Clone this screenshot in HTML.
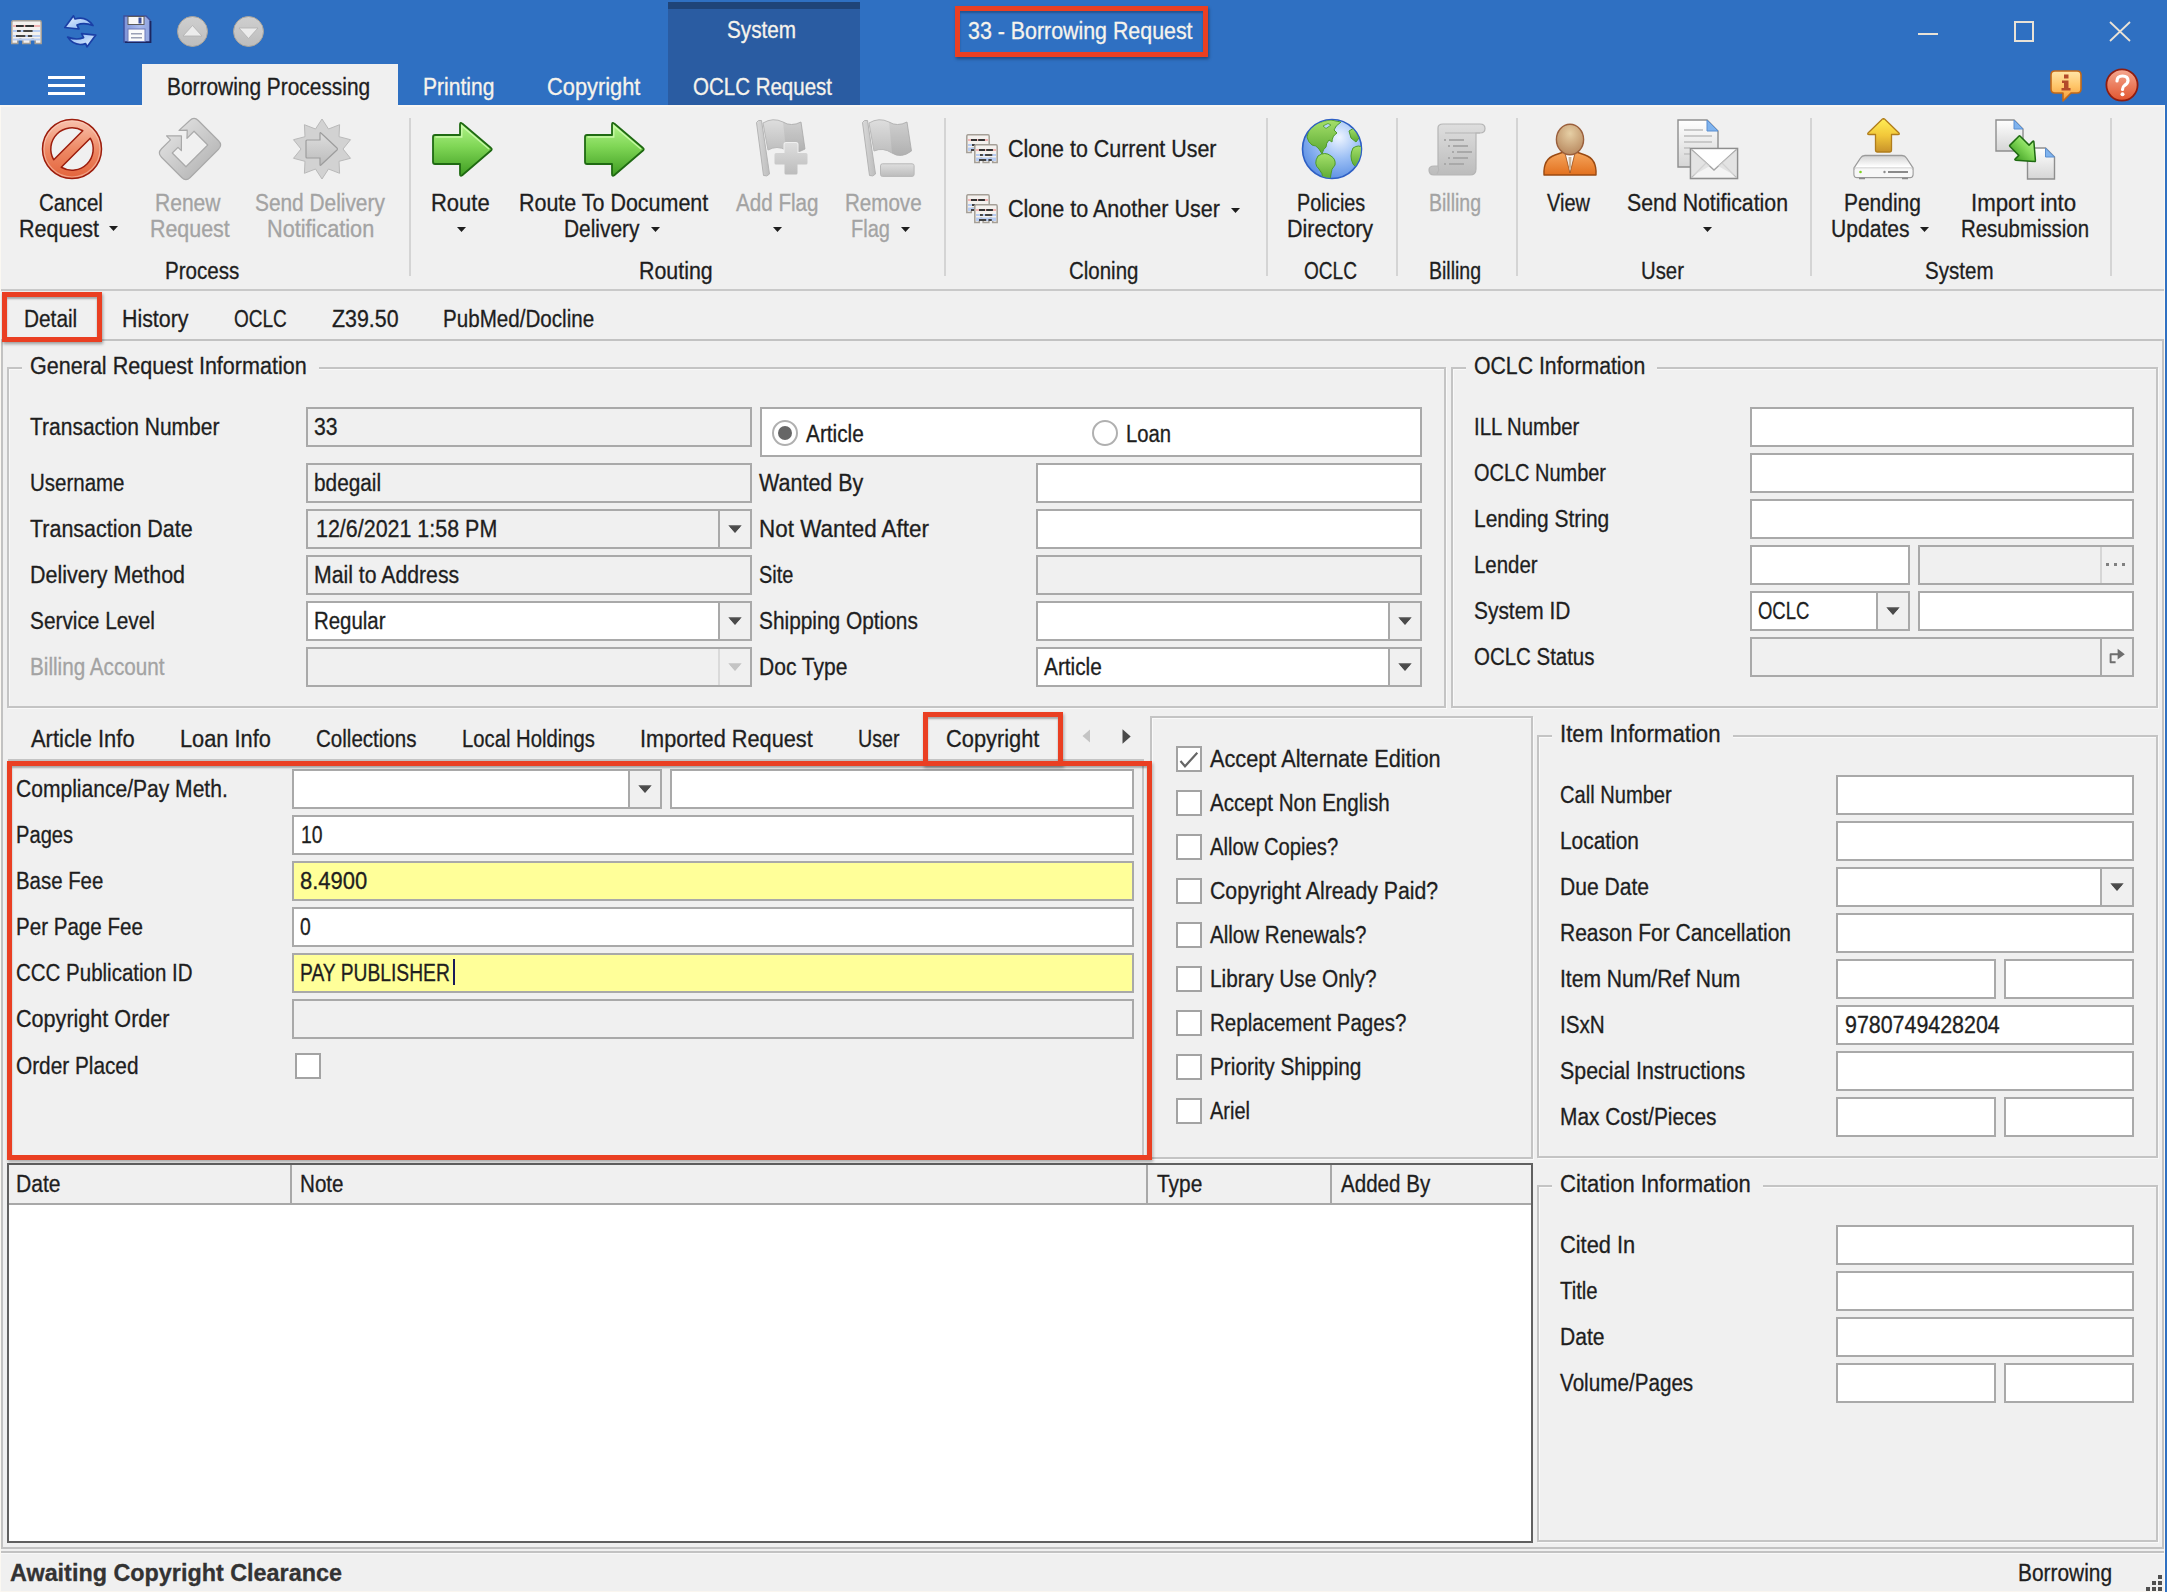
<!DOCTYPE html>
<html><head><meta charset="utf-8"><title>33 - Borrowing Request</title>
<style>
html,body{margin:0;padding:0;}
body{width:2167px;height:1592px;position:relative;overflow:hidden;background:#f0f0f0;font-family:"Liberation Sans",sans-serif;font-size:22px;color:#1e1e1e;}
div,span,svg{position:absolute;}
svg{overflow:visible;}
.t{white-space:nowrap;line-height:26px;height:26px;font-size:23px;transform-origin:0 50%;-webkit-text-stroke:0.3px currentColor;}
.w{color:#fff;}
.g{color:#a3a3a3;}
</style></head><body>

<div style="left:0px;top:0px;width:2167px;height:105px;background:#2f70c2;"></div>
<div style="left:668px;top:2px;width:192px;height:103px;background:#2a5ca2;"></div>
<div style="left:668px;top:2px;width:192px;height:7px;background:#1f4478;"></div>
<div style="left:142px;top:63.5px;width:256px;height:42px;background:#f0f0f0;"></div>
<div style="left:48px;top:76px;width:37px;height:3px;background:#fff;"></div>
<div style="left:48px;top:84px;width:37px;height:3px;background:#fff;"></div>
<div style="left:48px;top:92px;width:37px;height:3px;background:#fff;"></div>
<span class="t" style="left:727.3px;top:17px;transform:scaleX(0.9013);color:#f6f3ec;">System</span>
<span class="t" style="left:167.3px;top:74px;transform:scaleX(0.9080);">Borrowing Processing</span>
<span class="t" style="left:423.3px;top:74px;transform:scaleX(0.9154);color:#f6f3ec;">Printing</span>
<span class="t" style="left:547.3px;top:74px;transform:scaleX(0.9485);color:#f6f3ec;">Copyright</span>
<span class="t" style="left:693.3px;top:74px;transform:scaleX(0.8911);color:#f6f3ec;">OCLC Request</span>
<span class="t" style="left:967.8px;top:18px;transform:scaleX(0.9293);color:#f6f3ec;">33 - Borrowing Request</span>
<div style="left:1918px;top:33px;width:20px;height:2.4px;background:#e9e2d6;"></div>
<div style="left:2013.5px;top:21.3px;width:16.5px;height:16.5px;border:2px solid #e9e2d6;"></div>
<svg style="left:2109px;top:21px" width="22" height="21" viewBox="0 0 22 21"><path d="M1 1 L21 20 M21 1 L1 20" stroke="#e9e2d6" stroke-width="1.8" fill="none"/></svg>
<svg width="0" height="0" style="left:0;top:0"><defs>
<linearGradient id="gRed" x1="0" y1="0" x2="0" y2="1"><stop offset="0" stop-color="#f8c3ae"/><stop offset=".5" stop-color="#ee8a66"/><stop offset="1" stop-color="#e3633b"/></linearGradient>
<linearGradient id="gGrey" x1="0" y1="0" x2="0" y2="1"><stop offset="0" stop-color="#dedede"/><stop offset="1" stop-color="#bcbcbc"/></linearGradient>
<linearGradient id="gGrey2" x1="0" y1="0" x2="1" y2="0"><stop offset="0" stop-color="#d9d9d9"/><stop offset="1" stop-color="#bdbdbd"/></linearGradient>
<linearGradient id="gGreen" x1="0" y1="0" x2="0" y2="1"><stop offset="0" stop-color="#b4f58c"/><stop offset=".45" stop-color="#7fd655"/><stop offset="1" stop-color="#3f9d22"/></linearGradient>
<radialGradient id="gGlobe" cx=".62" cy=".3" r=".8"><stop offset="0" stop-color="#eef5ff"/><stop offset=".45" stop-color="#9dc0f5"/><stop offset="1" stop-color="#4f86e0"/></radialGradient>
<linearGradient id="gLand" x1="0" y1="0" x2="0" y2="1"><stop offset="0" stop-color="#a5e06a"/><stop offset="1" stop-color="#5aa832"/></linearGradient>
<radialGradient id="gHead" cx=".5" cy=".3" r=".7"><stop offset="0" stop-color="#e6cfa5"/><stop offset="1" stop-color="#b98a60"/></radialGradient>
<linearGradient id="gBody" x1="0" y1="0" x2="0" y2="1"><stop offset="0" stop-color="#f6a860"/><stop offset="1" stop-color="#e2701e"/></linearGradient>
<linearGradient id="gGold" x1="0" y1="0" x2="0" y2="1"><stop offset="0" stop-color="#ffee55"/><stop offset=".5" stop-color="#f2c83a"/><stop offset="1" stop-color="#c8922a"/></linearGradient>
<linearGradient id="gPaper" x1="0" y1="0" x2="0" y2="1"><stop offset="0" stop-color="#ffffff"/><stop offset="1" stop-color="#d5d5d5"/></linearGradient>
<linearGradient id="gDrive" x1="0" y1="0" x2="0" y2="1"><stop offset="0" stop-color="#d4d4d4"/><stop offset=".5" stop-color="#ffffff"/><stop offset="1" stop-color="#cfcfcf"/></linearGradient>
<linearGradient id="gBub" x1="0" y1="0" x2="0" y2="1"><stop offset="0" stop-color="#ffe6a8"/><stop offset=".5" stop-color="#ffc66a"/><stop offset="1" stop-color="#f59a35"/></linearGradient>
<linearGradient id="gHelp" x1="0" y1="0" x2="0" y2="1"><stop offset="0" stop-color="#f5a890"/><stop offset="1" stop-color="#e2552f"/></linearGradient>
<linearGradient id="gBlueArr" x1="0" y1="0" x2="1" y2="1"><stop offset="0" stop-color="#eaf3ff"/><stop offset="1" stop-color="#7fb0f0"/></linearGradient>
<linearGradient id="gFloppy" x1="0" y1="0" x2="1" y2="0"><stop offset="0" stop-color="#7d93d8"/><stop offset=".6" stop-color="#a8b9ea"/><stop offset="1" stop-color="#8ea3df"/></linearGradient>
<linearGradient id="gCirc" x1="0" y1="0" x2="0" y2="1"><stop offset="0" stop-color="#cfcfcf"/><stop offset="1" stop-color="#bdbdbd"/></linearGradient>
</defs></svg>
<svg style="left:11px;top:20px" width="31" height="24.5" viewBox="0 0 31 24.5"><path d="M2 0.8 H29 Q30.2 0.8 30.2 2.5 V23.5 H24.18 V20.5 Q21.7 17.5 19.22 20.5 V23.5 H11.78 V20.5 Q9.299999999999999 17.5 6.82 20.5 V23.5 H0.8 V2.5 Q0.8 0.8 2 0.8 Z" fill="#f4f1ee" stroke="#a59f97" stroke-width="1.5"/><rect x="2" y="5" width="27" height="2" fill="#f2b5b5"/><rect x="2" y="10" width="27" height="2" fill="#b9cdf2"/><rect x="2" y="15" width="27" height="2" fill="#b9cdf2"/><rect x="2" y="18.5" width="27" height="2" fill="#b9cdf2"/><rect x="5" y="5" width="7.75" height="2" fill="#333"/><rect x="14.299999999999999" y="5" width="8.680000000000001" height="2" fill="#333"/><rect x="6" y="10" width="3.7199999999999998" height="2" fill="#444"/><rect x="12.27" y="10" width="9.299999999999999" height="2" fill="#444"/><rect x="5" y="15" width="9.299999999999999" height="2" fill="#444"/><rect x="16.85" y="15" width="4.340000000000001" height="2" fill="#444"/></svg>
<svg style="left:64px;top:15px" width="32" height="32" viewBox="0 0 32 32"><path d="M29 10.5 Q22 0.5 11 4 L9.5 0.8 L0.8 12.5 L15 14 L13 10 Q20 7 29 10.5 Z" fill="url(#gBlueArr)" stroke="#1a3fa6" stroke-width="1.7" stroke-linejoin="round"/><path d="M29 10.5 Q22 0.5 11 4 L9.5 0.8 L0.8 12.5 L15 14 L13 10 Q20 7 29 10.5 Z" transform="rotate(180 16.3 16.3)" fill="url(#gBlueArr)" stroke="#1a3fa6" stroke-width="1.7" stroke-linejoin="round"/></svg>
<svg style="left:122.5px;top:15px" width="29" height="29" viewBox="0 0 29 29"><path d="M1 1 H23 L27 5 V27 H1 Z" fill="url(#gFloppy)" stroke="#3d4f9c" stroke-width="1.4"/><path d="M2 27.3 H27.6 V6" stroke="#1c2660" stroke-width="1.6" fill="none"/><rect x="5" y="1.5" width="16" height="8" fill="#f7f7f7" stroke="#5a5a5a" stroke-width="1"/><rect x="15.5" y="2.5" width="3" height="6" fill="#3d4f9c"/><rect x="5" y="14" width="17" height="12.5" fill="#fbfbfb" stroke="#6b78b8" stroke-width="1"/><rect x="8" y="18" width="11" height="1.5" fill="#9aa0b5"/><rect x="8" y="22" width="11" height="1.5" fill="#9aa0b5"/></svg>
<svg style="left:177.0px;top:16px" width="31" height="31" viewBox="0 0 31 31"><circle cx="15.5" cy="15.5" r="15" fill="url(#gCirc)" stroke="#a9a49c" stroke-width="1"/><path d="M6 20 L15.5 9.5 L25 20 Z" fill="#ececec" stroke="#b0b0b0" stroke-width=".8"/></svg>
<svg style="left:232.5px;top:16px" width="31" height="31" viewBox="0 0 31 31"><circle cx="15.5" cy="15.5" r="15" fill="url(#gCirc)" stroke="#a9a49c" stroke-width="1"/><path d="M6 12 L15.5 22.5 L25 12 Z" fill="#ececec" stroke="#b0b0b0" stroke-width=".8"/></svg>
<svg style="left:2050px;top:69.5px" width="32" height="32" viewBox="0 0 32 32"><path d="M5 1 H27 Q31 1 31 5 V19 Q31 23 27 23 H21 L13 31 V23 H5 Q1 23 1 19 V5 Q1 1 5 1 Z" fill="url(#gBub)" stroke="#c46a18" stroke-width="1.6" stroke-linejoin="round"/><rect x="14" y="4.5" width="4.5" height="4" fill="#b34a2a"/><path d="M12 10.5 H18.5 V18 H20.5 V20.5 H11.5 V18 H14 V13 H12 Z" fill="#b34a2a"/></svg>
<svg style="left:2105px;top:68.2px" width="34" height="34" viewBox="0 0 34 34"><circle cx="17" cy="17" r="15.6" fill="url(#gHelp)" stroke="#8f1d10" stroke-width="1.8"/><path d="M12 13 Q12 8 17.5 8 Q23 8 23 12.5 Q23 15.5 19.5 17.5 Q17.5 18.8 17.5 21.5" fill="none" stroke="#fff" stroke-width="3.2" stroke-linecap="round"/><circle cx="17.5" cy="26.3" r="2" fill="#fff"/></svg>
<div style="left:0px;top:105px;width:2167px;height:185px;background:#f0f0f0;"></div>
<div style="left:0px;top:289px;width:2167px;height:2px;background:#c9c9c9;"></div>
<div style="left:0px;top:105px;width:142px;height:2px;background:#f9f6f2;"></div>
<div style="left:398px;top:105px;width:1767px;height:2px;background:#f9f6f2;"></div>
<div style="left:409px;top:118px;width:2px;height:158px;background:#d4d4d4;"></div>
<div style="left:944px;top:118px;width:2px;height:158px;background:#d4d4d4;"></div>
<div style="left:1266px;top:118px;width:2px;height:158px;background:#d4d4d4;"></div>
<div style="left:1396px;top:118px;width:2px;height:158px;background:#d4d4d4;"></div>
<div style="left:1516px;top:118px;width:2px;height:158px;background:#d4d4d4;"></div>
<div style="left:1810px;top:118px;width:2px;height:158px;background:#d4d4d4;"></div>
<div style="left:2110px;top:118px;width:2px;height:158px;background:#d4d4d4;"></div>
<span class="t" style="left:38.8px;top:190px;transform:scaleX(0.8917);">Cancel</span>
<span class="t" style="left:19.4px;top:216px;transform:scaleX(0.9349);">Request</span>
<svg style="left:109.0px;top:225.5px" width="9" height="5" viewBox="0 0 9 5"><path d="M0 0 L9 0 L4.5 5 Z" fill="#1e1e1e"/></svg>
<span class="t" style="left:154.6px;top:190px;transform:scaleX(0.9153);color:#a3a3a3;">Renew</span>
<span class="t" style="left:149.6px;top:216px;transform:scaleX(0.9302);color:#a3a3a3;">Request</span>
<span class="t" style="left:255.4px;top:190px;transform:scaleX(0.9069);color:#a3a3a3;">Send Delivery</span>
<span class="t" style="left:267.0px;top:216px;transform:scaleX(0.9421);color:#a3a3a3;">Notification</span>
<span class="t" style="left:430.5px;top:190px;transform:scaleX(0.9557);">Route</span>
<svg style="left:456.5px;top:226.5px" width="9" height="5" viewBox="0 0 9 5"><path d="M0 0 L9 0 L4.5 5 Z" fill="#1e1e1e"/></svg>
<span class="t" style="left:519.3px;top:190px;transform:scaleX(0.9328);">Route To Document</span>
<span class="t" style="left:563.7px;top:216px;transform:scaleX(0.9083);">Delivery</span>
<svg style="left:650.5px;top:226.5px" width="9" height="5" viewBox="0 0 9 5"><path d="M0 0 L9 0 L4.5 5 Z" fill="#1e1e1e"/></svg>
<span class="t" style="left:736.3px;top:190px;transform:scaleX(0.8967);color:#a3a3a3;">Add Flag</span>
<svg style="left:772.5px;top:226.5px" width="9" height="5" viewBox="0 0 9 5"><path d="M0 0 L9 0 L4.5 5 Z" fill="#1e1e1e"/></svg>
<span class="t" style="left:845.4px;top:190px;transform:scaleX(0.8942);color:#a3a3a3;">Remove</span>
<span class="t" style="left:851.3px;top:216px;transform:scaleX(0.8689);color:#a3a3a3;">Flag</span>
<svg style="left:900.5px;top:226.5px" width="9" height="5" viewBox="0 0 9 5"><path d="M0 0 L9 0 L4.5 5 Z" fill="#1e1e1e"/></svg>
<span class="t" style="left:1007.5px;top:136px;transform:scaleX(0.9321);">Clone to Current User</span>
<span class="t" style="left:1007.5px;top:196px;transform:scaleX(0.9361);">Clone to Another User</span>
<svg style="left:1230.9px;top:207.5px" width="9" height="5" viewBox="0 0 9 5"><path d="M0 0 L9 0 L4.5 5 Z" fill="#1e1e1e"/></svg>
<span class="t" style="left:1296.7px;top:190px;transform:scaleX(0.8608);">Policies</span>
<span class="t" style="left:1287.0px;top:216px;transform:scaleX(0.9355);">Directory</span>
<span class="t" style="left:1428.7px;top:190px;transform:scaleX(0.8475);color:#a3a3a3;">Billing</span>
<span class="t" style="left:1547.0px;top:190px;transform:scaleX(0.8680);">View</span>
<span class="t" style="left:1627.3px;top:190px;transform:scaleX(0.9259);">Send Notification</span>
<svg style="left:1702.5px;top:226.5px" width="9" height="5" viewBox="0 0 9 5"><path d="M0 0 L9 0 L4.5 5 Z" fill="#1e1e1e"/></svg>
<span class="t" style="left:1844.4px;top:190px;transform:scaleX(0.9107);">Pending</span>
<span class="t" style="left:1831.4px;top:216px;transform:scaleX(0.9163);">Updates</span>
<svg style="left:1920.3px;top:226.5px" width="9" height="5" viewBox="0 0 9 5"><path d="M0 0 L9 0 L4.5 5 Z" fill="#1e1e1e"/></svg>
<span class="t" style="left:1970.9px;top:190px;transform:scaleX(0.9679);">Import into</span>
<span class="t" style="left:1960.9px;top:216px;transform:scaleX(0.8861);">Resubmission</span>
<span class="t" style="left:165.0px;top:258px;transform:scaleX(0.8952);">Process</span>
<span class="t" style="left:639.3px;top:258px;transform:scaleX(0.9291);">Routing</span>
<span class="t" style="left:1069.3px;top:258px;transform:scaleX(0.8897);">Cloning</span>
<span class="t" style="left:1303.5px;top:258px;transform:scaleX(0.8281);">OCLC</span>
<span class="t" style="left:1428.7px;top:258px;transform:scaleX(0.8475);">Billing</span>
<span class="t" style="left:1641.0px;top:258px;transform:scaleX(0.8837);">User</span>
<span class="t" style="left:1925.4px;top:258px;transform:scaleX(0.8935);">System</span>
<svg style="left:41.4px;top:118.1px" width="62" height="62" viewBox="0 0 62 62"><circle cx="31" cy="31" r="29.5" fill="url(#gRed)" stroke="#9c1d0d" stroke-width="1.5"/><circle cx="31" cy="31" r="28" fill="none" stroke="#fbd5c6" stroke-width="1.2" opacity=".5"/><path d="M12.74 41.77 A21.2 21.2 0 0 1 41.77 12.74 Z" fill="#f0f0f0" stroke="#9c1d0d" stroke-width="1.5" stroke-linejoin="round"/><path d="M49.26 20.23 A21.2 21.2 0 0 1 20.23 49.26 Z" fill="#f0f0f0" stroke="#9c1d0d" stroke-width="1.5" stroke-linejoin="round"/></svg>
<svg style="left:158.2px;top:117.2px" width="64" height="64" viewBox="0 0 64 64"><g transform="rotate(-45 32 32)"><path d="M35.2 16.7 L24.7 27.1 L24.7 22.3 L16.6 22.3 L16.6 41.7 L47.4 41.7 L47.4 22.3 L37.4 22.3 L43.4 16.7 L37.4 11.1 L52.0 11.7 Q58.0 11.7 58.0 17.7 L58.0 46.3 Q58.0 52.3 52.0 52.3 L12.0 52.3 Q6.0 52.3 6.0 46.3 L6.0 17.7 Q6.0 11.7 12.0 11.7 L24.7 11.7 L24.7 6.1 Z" fill="url(#gGrey)" stroke="#a9a9a9" stroke-width="1.2" stroke-linejoin="round"/></g></svg>
<svg style="left:290.1px;top:117.2px" width="64" height="64" viewBox="0 0 64 64"><polygon points="32.0,2.0 38.5,12.0 49.6,7.7 49.0,19.7 60.5,22.7 53.0,32.0 60.5,41.3 49.0,44.3 49.6,56.3 38.5,52.0 32.0,62.0 25.5,52.0 14.4,56.3 15.0,44.3 3.5,41.3 11.0,32.0 3.5,22.7 15.0,19.7 14.4,7.7 25.5,12.0" fill="#d2d2d2" stroke="#b9b9b9" stroke-width="1"/><path d="M17 23 H30 V16.5 Q30 15 31.2 16.2 L47 31 Q48 32 47 33 L31.2 47.8 Q30 49 30 47.5 V41 H17 Q16 41 16 40 V24 Q16 23 17 23 Z" fill="url(#gGrey)" stroke="#9d9d9d" stroke-width="1.2"/></svg>
<svg style="left:432px;top:120.7px" width="62" height="57" viewBox="0 0 62 57"><path d="M3 14 H28 V3.5 Q28 0.5 30.5 2.8 L59 27 Q60.5 28.2 59 29.5 L30.5 54 Q28 56 28 53 V43 H3 Q1 43 1 41 V16 Q1 14 3 14 Z" fill="url(#gGreen)" stroke="#1f6a12" stroke-width="1.8" stroke-linejoin="round"/><path d="M3.5 16 H29.8 V5 L57 28" fill="none" stroke="#d5ffb5" stroke-width="1.3" opacity=".8"/></svg>
<svg style="left:584px;top:120.7px" width="62" height="57" viewBox="0 0 62 57"><path d="M3 14 H28 V3.5 Q28 0.5 30.5 2.8 L59 27 Q60.5 28.2 59 29.5 L30.5 54 Q28 56 28 53 V43 H3 Q1 43 1 41 V16 Q1 14 3 14 Z" fill="url(#gGreen)" stroke="#1f6a12" stroke-width="1.8" stroke-linejoin="round"/><path d="M3.5 16 H29.8 V5 L57 28" fill="none" stroke="#d5ffb5" stroke-width="1.3" opacity=".8"/></svg>
<svg style="left:755px;top:119px" width="60" height="60" viewBox="0 0 60 60"><path d="M1.5 3.5 Q3 0.5 6.5 1.5 L14.5 55 Q12 58 8.5 56.5 Z" fill="url(#gGrey2)" stroke="#b4b4b4" stroke-width="1"/><path d="M8 4 Q18 -2 28 3 Q36 8 46 3 L50 30 Q40 36 31 31 Q22 26 13 31 Z" fill="url(#gGrey)" stroke="#b8b8b8" stroke-width="1"/><path d="M28 3 Q36 8 46 3 L50 30 Q40 36 31 31 Z" fill="#000" opacity=".06"/><path d="M31 24 H41 Q42.5 24 42.5 25.5 V34 H51 Q52.5 34 52.5 35.5 V44 Q52.5 45.5 51 45.5 H42.5 V54 Q42.5 55.5 41 55.5 H31 Q29.5 55.5 29.5 54 V45.5 H21 Q19.5 45.5 19.5 44 V35.5 Q19.5 34 21 34 H29.5 V25.5 Q29.5 24 31 24 Z" fill="url(#gGrey)" stroke="#f0f0f0" stroke-width="2" paint-order="stroke"/></svg>
<svg style="left:860.5px;top:119px" width="60" height="60" viewBox="0 0 60 60"><path d="M1.5 3.5 Q3 0.5 6.5 1.5 L14.5 55 Q12 58 8.5 56.5 Z" fill="url(#gGrey2)" stroke="#b4b4b4" stroke-width="1"/><path d="M8 4 Q18 -2 28 3 Q36 8 46 3 L50.5 32 Q40 40 31 34 Q22 28 13 32 Z" fill="url(#gGrey)" stroke="#b8b8b8" stroke-width="1"/><path d="M28 3 Q36 8 46 3 L50.5 32 Q40 40 31 34 Z" fill="#000" opacity=".06"/><rect x="19.5" y="44.8" width="33.6" height="12.6" rx="2" fill="url(#gGrey)" stroke="#b8b8b8" stroke-width="1"/></svg>
<svg style="left:966px;top:133.5px" width="24" height="19.5" viewBox="0 0 24 19.5"><path d="M2 0.8 H22 Q23.2 0.8 23.2 2.5 V18.5 H18.72 V15.5 Q16.799999999999997 12.5 14.879999999999999 15.5 V18.5 H9.120000000000001 V15.5 Q7.199999999999999 12.5 5.28 15.5 V18.5 H0.8 V2.5 Q0.8 0.8 2 0.8 Z" fill="#f4f1ee" stroke="#a59f97" stroke-width="1.5"/><rect x="2" y="5" width="20" height="2" fill="#f2b5b5"/><rect x="2" y="10" width="20" height="2" fill="#b9cdf2"/><rect x="2" y="15" width="20" height="2" fill="#b9cdf2"/><rect x="2" y="13.5" width="20" height="2" fill="#b9cdf2"/><rect x="5" y="5" width="6.0" height="2" fill="#333"/><rect x="12.2" y="5" width="6.720000000000001" height="2" fill="#333"/><rect x="6" y="10" width="2.88" height="2" fill="#444"/><rect x="11.08" y="10" width="7.199999999999999" height="2" fill="#444"/><rect x="5" y="15" width="7.199999999999999" height="2" fill="#444"/><rect x="14.399999999999999" y="15" width="3.3600000000000003" height="2" fill="#444"/></svg>
<svg style="left:974.2px;top:143.5px" width="24" height="19.5" viewBox="0 0 24 19.5"><path d="M2 0.8 H22 Q23.2 0.8 23.2 2.5 V18.5 H18.72 V15.5 Q16.799999999999997 12.5 14.879999999999999 15.5 V18.5 H9.120000000000001 V15.5 Q7.199999999999999 12.5 5.28 15.5 V18.5 H0.8 V2.5 Q0.8 0.8 2 0.8 Z" fill="#f4f1ee" stroke="#a59f97" stroke-width="1.5"/><rect x="2" y="5" width="20" height="2" fill="#f2b5b5"/><rect x="2" y="10" width="20" height="2" fill="#b9cdf2"/><rect x="2" y="15" width="20" height="2" fill="#b9cdf2"/><rect x="2" y="13.5" width="20" height="2" fill="#b9cdf2"/><rect x="5" y="5" width="6.0" height="2" fill="#333"/><rect x="12.2" y="5" width="6.720000000000001" height="2" fill="#333"/><rect x="6" y="10" width="2.88" height="2" fill="#444"/><rect x="11.08" y="10" width="7.199999999999999" height="2" fill="#444"/><rect x="5" y="15" width="7.199999999999999" height="2" fill="#444"/><rect x="14.399999999999999" y="15" width="3.3600000000000003" height="2" fill="#444"/></svg>
<svg style="left:966px;top:193.5px" width="24" height="19.5" viewBox="0 0 24 19.5"><path d="M2 0.8 H22 Q23.2 0.8 23.2 2.5 V18.5 H18.72 V15.5 Q16.799999999999997 12.5 14.879999999999999 15.5 V18.5 H9.120000000000001 V15.5 Q7.199999999999999 12.5 5.28 15.5 V18.5 H0.8 V2.5 Q0.8 0.8 2 0.8 Z" fill="#f4f1ee" stroke="#a59f97" stroke-width="1.5"/><rect x="2" y="5" width="20" height="2" fill="#f2b5b5"/><rect x="2" y="10" width="20" height="2" fill="#b9cdf2"/><rect x="2" y="15" width="20" height="2" fill="#b9cdf2"/><rect x="2" y="13.5" width="20" height="2" fill="#b9cdf2"/><rect x="5" y="5" width="6.0" height="2" fill="#333"/><rect x="12.2" y="5" width="6.720000000000001" height="2" fill="#333"/><rect x="6" y="10" width="2.88" height="2" fill="#444"/><rect x="11.08" y="10" width="7.199999999999999" height="2" fill="#444"/><rect x="5" y="15" width="7.199999999999999" height="2" fill="#444"/><rect x="14.399999999999999" y="15" width="3.3600000000000003" height="2" fill="#444"/></svg>
<svg style="left:974.2px;top:203.5px" width="24" height="19.5" viewBox="0 0 24 19.5"><path d="M2 0.8 H22 Q23.2 0.8 23.2 2.5 V18.5 H18.72 V15.5 Q16.799999999999997 12.5 14.879999999999999 15.5 V18.5 H9.120000000000001 V15.5 Q7.199999999999999 12.5 5.28 15.5 V18.5 H0.8 V2.5 Q0.8 0.8 2 0.8 Z" fill="#f4f1ee" stroke="#a59f97" stroke-width="1.5"/><rect x="2" y="5" width="20" height="2" fill="#f2b5b5"/><rect x="2" y="10" width="20" height="2" fill="#b9cdf2"/><rect x="2" y="15" width="20" height="2" fill="#b9cdf2"/><rect x="2" y="13.5" width="20" height="2" fill="#b9cdf2"/><rect x="5" y="5" width="6.0" height="2" fill="#333"/><rect x="12.2" y="5" width="6.720000000000001" height="2" fill="#333"/><rect x="6" y="10" width="2.88" height="2" fill="#444"/><rect x="11.08" y="10" width="7.199999999999999" height="2" fill="#444"/><rect x="5" y="15" width="7.199999999999999" height="2" fill="#444"/><rect x="14.399999999999999" y="15" width="3.3600000000000003" height="2" fill="#444"/></svg>
<svg style="left:1300.8px;top:118px" width="62" height="62" viewBox="0 0 62 62"><circle cx="31" cy="31" r="29.5" fill="url(#gGlobe)" stroke="#2e5fc4" stroke-width="1.6"/><clipPath id="gc"><circle cx="31" cy="31" r="29"/></clipPath><g clip-path="url(#gc)" fill="url(#gLand)" stroke="#4e9a2a" stroke-width="1"><path d="M8 12 Q16 3 30 2 L40 4 Q34 8 33 12 L36 15 Q31 18 31 24 L28 22 Q25 25 25 29 Q22 31 21 36 L18 31 Q15 27 11 27 Q7 24 6 19 Z"/><path d="M17 38 Q24 33 30 38 Q35 41 34 47 Q30 51 30 56 L29 62 H22 Q22 55 18 51 Q12 46 17 38 Z"/><path d="M48 13 L53 10 L58 20 L55 24 L50 20 Z"/><path d="M52 30 Q58 26 62 30 V48 Q56 52 52 46 Q48 38 52 30 Z"/></g><path d="M22 8 L27 5.5 L30 7 L25 10.5 Z" fill="#b7d3f7" stroke="#4e9a2a" stroke-width=".8"/></svg>
<svg style="left:1427.5px;top:123px" width="58" height="53" viewBox="0 0 58 53"><path d="M10 5 Q10 1 15 1 H52 Q57 1 57 5.5 Q57 10 52 10 H48 V46 Q48 52 42 52 H6 Q1 52 1 47 Q1 43 6 43 H10 Z" fill="url(#gGrey)" stroke="#b5b5b5" stroke-width="1.2"/><path d="M17 10 H52" stroke="#b5b5b5" stroke-width="1"/><path d="M10 43 Q12 47 9 51" stroke="#b5b5b5" stroke-width="1" fill="none"/><g fill="#a9a9a9"><rect x="16" y="16" width="2" height="2"/><rect x="21" y="16" width="15" height="2"/><rect x="20" y="22" width="2" height="2"/><rect x="25" y="22" width="15" height="2"/><rect x="24" y="28" width="2" height="2"/><rect x="29" y="28" width="15" height="2"/><rect x="20" y="34" width="2" height="2"/><rect x="25" y="34" width="15" height="2"/><rect x="16" y="40" width="2" height="2"/><rect x="21" y="40" width="15" height="2"/></g></svg>
<svg style="left:1542.6px;top:123px" width="54" height="54" viewBox="0 0 54 54"><path d="M1 52 Q0 36 12 32 L22 28.5 H32 L42 32 Q54 36 53 52 Z" fill="url(#gBody)" stroke="#9a4a12" stroke-width="1.4" stroke-linejoin="round"/><path d="M22 30 L27 50 L32 30 Z" fill="#fff" stroke="#9a4a12" stroke-width=".8"/><path d="M25.5 34 H28.5 L28 44 L27 48 L26 44 Z" fill="#c9b59c"/><ellipse cx="27" cy="16.5" rx="13.6" ry="15.2" fill="url(#gHead)" stroke="#9a5f3c" stroke-width="1.4"/></svg>
<svg style="left:1677px;top:118.5px" width="62" height="61" viewBox="0 0 62 61"><path d="M1 1 H30 L41 12 V48 H1 Z" fill="url(#gPaper)" stroke="#8e8e8e" stroke-width="1.4"/><path d="M30 1 V12 H41 Z" fill="#7fb3ee" stroke="#5a8ed0" stroke-width="1"/><g fill="#c9c9c9"><rect x="7" y="10" width="19" height="2"/><rect x="7" y="16" width="28" height="2"/><rect x="7" y="22" width="28" height="2"/><rect x="7" y="28" width="6" height="2"/><rect x="7" y="34" width="6" height="2"/></g><rect x="13.5" y="29.5" width="47" height="30" fill="#f4f4f4" stroke="#8e8e8e" stroke-width="1.6"/><path d="M14.5 58.5 L31 42 M59.5 58.5 L43 42" stroke="#bdbdbd" stroke-width="1.3" fill="none"/><path d="M14.5 30.5 L37 51 L59.5 30.5" fill="#fff" stroke="#a5a5a5" stroke-width="1.4"/><path d="M15 57 L14.5 31 L33 47 Z M59 57 L59.5 31 L41 47 Z" fill="#dcdcdc" opacity=".7"/></svg>
<svg style="left:1853.3px;top:118.2px" width="61" height="62" viewBox="0 0 61 62"><path d="M30.5 1.2 Q30.5 0 31.8 1.2 L46 15 Q47 16.5 45 16.5 H38.5 V32 Q38.5 34 36.5 34 H24.5 Q22.5 34 22.5 32 V16.5 H16 Q14 16.5 15 15 L29.2 1.2 Q30.5 0 30.5 1.2 Z" fill="url(#gGold)" stroke="#b07d1c" stroke-width="1.3" stroke-linejoin="round"/><path d="M12 37.5 H49 Q52 37.5 53.5 40 L60 50 V56.5 Q60 59.5 57 59.5 H4 Q1 59.5 1 56.5 V50 L7.5 40 Q9 37.5 12 37.5 Z" fill="url(#gDrive)" stroke="#9a9a9a" stroke-width="1.3"/><path d="M1.5 50 H59.5" stroke="#c4c4c4" stroke-width="1"/><rect x="1.6" y="50.5" width="57.8" height="8.4" rx="2" fill="#f7f7f7"/><circle cx="7.5" cy="54" r="1.3" fill="#7ed321"/><circle cx="31.5" cy="54" r="1.2" fill="#8a8a8a"/><rect x="35" y="53" width="20" height="2" fill="#8a8a8a"/><path d="M6 60.5 H12 M49 60.5 H55" stroke="#8a8a8a" stroke-width="1.6"/></svg>
<svg style="left:1995.3px;top:118.5px" width="61" height="62" viewBox="0 0 61 62"><path d="M1 1 H19 L28 10 V32 H1 Z" fill="url(#gPaper)" stroke="#8e8e8e" stroke-width="1.4"/><path d="M19 1 V10 H28 Z" fill="#7fb3ee" stroke="#5a8ed0" stroke-width="1"/><path d="M32.5 29 H50.5 L59.5 38 V60 H32.5 Z" fill="url(#gPaper)" stroke="#8e8e8e" stroke-width="1.4"/><path d="M50.5 29 V38 H59.5 Z" fill="#7fb3ee" stroke="#5a8ed0" stroke-width="1"/><g transform="translate(30 32.3) rotate(45) scale(.5) translate(-31 -28.5)"><path d="M3 14 H28 V3.5 Q28 0.5 30.5 2.8 L59 27 Q60.5 28.2 59 29.5 L30.5 54 Q28 56 28 53 V43 H3 Q1 43 1 41 V16 Q1 14 3 14 Z" fill="url(#gGreen)" stroke="#1f6a12" stroke-width="3" stroke-linejoin="round"/></g></svg>
<div style="left:100px;top:338.5px;width:2064px;height:2px;background:#c2c2c2;"></div>
<div style="left:2161.7px;top:339px;width:2px;height:1209.5px;background:#c2c2c2;"></div>
<div style="left:1px;top:1546.5px;width:2162.7px;height:2px;background:#c2c2c2;"></div>
<div style="left:1px;top:339px;width:2px;height:1209.5px;background:#c2c2c2;"></div>
<span class="t" style="left:23.8px;top:306px;transform:scaleX(0.9051);">Detail</span>
<span class="t" style="left:121.8px;top:306px;transform:scaleX(0.9292);">History</span>
<span class="t" style="left:233.8px;top:306px;transform:scaleX(0.8266);">OCLC</span>
<span class="t" style="left:331.8px;top:306px;transform:scaleX(0.9292);">Z39.50</span>
<span class="t" style="left:443.3px;top:306px;transform:scaleX(0.8959);">PubMed/Docline</span>
<div style="left:7px;top:367px;width:1435px;height:337px;border:2px solid #c4c4c4;box-shadow:1px 1px 0 #f9f9f9, inset 1px 1px 0 #f9f9f9;"></div>
<div style="left:22px;top:365px;width:296.5px;height:8px;background:#f0f0f0;"></div>
<span class="t" style="left:29.8px;top:353px;transform:scaleX(0.9369);">General Request Information</span>
<div style="left:1451px;top:367px;width:703px;height:337px;border:2px solid #c4c4c4;box-shadow:1px 1px 0 #f9f9f9, inset 1px 1px 0 #f9f9f9;"></div>
<div style="left:1466px;top:365px;width:191px;height:8px;background:#f0f0f0;"></div>
<span class="t" style="left:1473.8px;top:353px;transform:scaleX(0.9238);">OCLC Information</span>
<span class="t" style="left:29.8px;top:414px;transform:scaleX(0.9130);">Transaction Number</span>
<span class="t" style="left:29.8px;top:470px;transform:scaleX(0.8906);">Username</span>
<span class="t" style="left:29.8px;top:516px;transform:scaleX(0.9333);">Transaction Date</span>
<span class="t" style="left:29.8px;top:562px;transform:scaleX(0.9331);">Delivery Method</span>
<span class="t" style="left:29.8px;top:608px;transform:scaleX(0.9051);">Service Level</span>
<span class="t" style="left:29.8px;top:654px;transform:scaleX(0.8993);color:#a3a3a3;">Billing Account</span>
<div class="f" style="left:306px;top:407px;width:442px;height:36px;background:#f0f0f0;border:2px solid #a9a9a9;"></div>
<span class="t" style="left:313.8px;top:414px;transform:scaleX(0.9192);">33</span>
<div class="f" style="left:306px;top:463px;width:442px;height:36px;background:#f0f0f0;border:2px solid #a9a9a9;"></div>
<span class="t" style="left:313.8px;top:470px;transform:scaleX(0.9041);">bdegail</span>
<div class="f" style="left:306px;top:509px;width:442px;height:36px;background:#f0f0f0;border:2px solid #a9a9a9;"></div>
<div style="left:720px;top:511px;width:30px;height:36px;background:#f0f0f0;"></div>
<div style="left:718px;top:511px;width:2px;height:36px;background:#a9a9a9;"></div>
<svg style="left:728.2px;top:525.0px" width="14" height="8" viewBox="0 0 14 8"><path d="M0.3 0.3 L13.7 0.3 L7 8 Z" fill="#555"/></svg>
<div style="left:718px;top:511px;width:2px;height:36px;background:#a9a9a9;"></div>
<svg style="left:729px;top:526.0px" width="12" height="7" viewBox="0 0 12 7"><path d="M0.5 0.5 L11.5 0.5 L6 6.5 Z" fill="#4a4a4a"/></svg>
<span class="t" style="left:315.8px;top:516px;transform:scaleX(0.9325);">12/6/2021 1:58 PM</span>
<div class="f" style="left:306px;top:555px;width:442px;height:36px;background:#f0f0f0;border:2px solid #a9a9a9;"></div>
<span class="t" style="left:313.8px;top:562px;transform:scaleX(0.9229);">Mail to Address</span>
<div class="f" style="left:306px;top:601px;width:442px;height:36px;background:#fff;border:2px solid #a9a9a9;"></div>
<div style="left:720px;top:603px;width:30px;height:36px;background:#f0f0f0;"></div>
<div style="left:718px;top:603px;width:2px;height:36px;background:#a9a9a9;"></div>
<svg style="left:728.2px;top:617.0px" width="14" height="8" viewBox="0 0 14 8"><path d="M0.3 0.3 L13.7 0.3 L7 8 Z" fill="#555"/></svg>
<div style="left:718px;top:603px;width:2px;height:36px;background:#a9a9a9;"></div>
<svg style="left:729px;top:618.0px" width="12" height="7" viewBox="0 0 12 7"><path d="M0.5 0.5 L11.5 0.5 L6 6.5 Z" fill="#4a4a4a"/></svg>
<span class="t" style="left:313.8px;top:608px;transform:scaleX(0.8877);">Regular</span>
<div class="f" style="left:306px;top:647px;width:442px;height:36px;background:#f0f0f0;border:2px solid #a9a9a9;"></div>
<div style="left:720px;top:649px;width:30px;height:36px;background:#f0f0f0;"></div>
<div style="left:718px;top:649px;width:2px;height:36px;background:#dadada;"></div>
<svg style="left:728.2px;top:663.0px" width="14" height="8" viewBox="0 0 14 8"><path d="M0.3 0.3 L13.7 0.3 L7 8 Z" fill="#c4c4c4"/></svg>
<div style="left:718px;top:649px;width:2px;height:36px;background:#dadada;"></div>
<svg style="left:729px;top:664.0px" width="12" height="7" viewBox="0 0 12 7"><path d="M0.5 0.5 L11.5 0.5 L6 6.5 Z" fill="#c4c4c4"/></svg>
<div style="left:760px;top:407px;width:658px;height:46px;background:#fff;border:2px solid #a9a9a9;"></div>
<svg style="left:770.5px;top:418.5px" width="28" height="28" viewBox="0 0 28 28"><circle cx="14" cy="14" r="12" fill="#fff" stroke="#b0b0b0" stroke-width="2"/><circle cx="14" cy="14" r="7" fill="#666"/></svg>
<span class="t" style="left:805.8px;top:421px;transform:scaleX(0.9047);">Article</span>
<svg style="left:1090.5px;top:418.5px" width="28" height="28" viewBox="0 0 28 28"><circle cx="14" cy="14" r="12" fill="#fff" stroke="#b0b0b0" stroke-width="2"/></svg>
<span class="t" style="left:1125.8px;top:421px;transform:scaleX(0.8804);">Loan</span>
<span class="t" style="left:759.0px;top:470px;transform:scaleX(0.9348);">Wanted By</span>
<span class="t" style="left:759.0px;top:516px;transform:scaleX(0.9754);">Not Wanted After</span>
<span class="t" style="left:759.0px;top:562px;transform:scaleX(0.8675);">Site</span>
<span class="t" style="left:759.0px;top:608px;transform:scaleX(0.9069);">Shipping Options</span>
<span class="t" style="left:759.0px;top:654px;transform:scaleX(0.9144);">Doc Type</span>
<div class="f" style="left:1036px;top:463px;width:382px;height:36px;background:#fff;border:2px solid #a9a9a9;"></div>
<div class="f" style="left:1036px;top:509px;width:382px;height:36px;background:#fff;border:2px solid #a9a9a9;"></div>
<div class="f" style="left:1036px;top:555px;width:382px;height:36px;background:#f0f0f0;border:2px solid #a9a9a9;"></div>
<div class="f" style="left:1036px;top:601px;width:382px;height:36px;background:#fff;border:2px solid #a9a9a9;"></div>
<div style="left:1390px;top:603px;width:30px;height:36px;background:#f0f0f0;"></div>
<div style="left:1388px;top:603px;width:2px;height:36px;background:#a9a9a9;"></div>
<svg style="left:1398.2px;top:617.0px" width="14" height="8" viewBox="0 0 14 8"><path d="M0.3 0.3 L13.7 0.3 L7 8 Z" fill="#555"/></svg>
<div style="left:1388px;top:603px;width:2px;height:36px;background:#a9a9a9;"></div>
<svg style="left:1399px;top:618.0px" width="12" height="7" viewBox="0 0 12 7"><path d="M0.5 0.5 L11.5 0.5 L6 6.5 Z" fill="#4a4a4a"/></svg>
<div class="f" style="left:1036px;top:647px;width:382px;height:36px;background:#fff;border:2px solid #a9a9a9;"></div>
<div style="left:1390px;top:649px;width:30px;height:36px;background:#f0f0f0;"></div>
<div style="left:1388px;top:649px;width:2px;height:36px;background:#a9a9a9;"></div>
<svg style="left:1398.2px;top:663.0px" width="14" height="8" viewBox="0 0 14 8"><path d="M0.3 0.3 L13.7 0.3 L7 8 Z" fill="#555"/></svg>
<div style="left:1388px;top:649px;width:2px;height:36px;background:#a9a9a9;"></div>
<svg style="left:1399px;top:664.0px" width="12" height="7" viewBox="0 0 12 7"><path d="M0.5 0.5 L11.5 0.5 L6 6.5 Z" fill="#4a4a4a"/></svg>
<span class="t" style="left:1043.8px;top:654px;transform:scaleX(0.9047);">Article</span>
<span class="t" style="left:1473.8px;top:414px;transform:scaleX(0.8825);">ILL Number</span>
<span class="t" style="left:1473.8px;top:460px;transform:scaleX(0.8678);">OCLC Number</span>
<span class="t" style="left:1473.8px;top:506px;transform:scaleX(0.9115);">Lending String</span>
<span class="t" style="left:1473.8px;top:552px;transform:scaleX(0.8875);">Lender</span>
<span class="t" style="left:1473.8px;top:598px;transform:scaleX(0.9094);">System ID</span>
<span class="t" style="left:1473.8px;top:644px;transform:scaleX(0.8890);">OCLC Status</span>
<div class="f" style="left:1750px;top:407px;width:380px;height:36px;background:#fff;border:2px solid #a9a9a9;"></div>
<div class="f" style="left:1750px;top:453px;width:380px;height:36px;background:#fff;border:2px solid #a9a9a9;"></div>
<div class="f" style="left:1750px;top:499px;width:380px;height:36px;background:#fff;border:2px solid #a9a9a9;"></div>
<div class="f" style="left:1750px;top:545px;width:156px;height:36px;background:#fff;border:2px solid #a9a9a9;"></div>
<div class="f" style="left:1918px;top:545px;width:212px;height:36px;background:#f0f0f0;border:2px solid #a9a9a9;"></div>
<div style="left:2102px;top:547px;width:30px;height:36px;background:#f0f0f0;"></div>
<div style="left:2100px;top:547px;width:2px;height:36px;background:#d6d6d6;"></div>
<div style="left:2100px;top:547px;width:2px;height:36px;background:#d6d6d6;"></div>
<div style="left:2106px;top:563px;width:3.4px;height:3.4px;background:#808080;"></div>
<div style="left:2114px;top:563px;width:3.4px;height:3.4px;background:#808080;"></div>
<div style="left:2122px;top:563px;width:3.4px;height:3.4px;background:#808080;"></div>
<div class="f" style="left:1750px;top:591px;width:156px;height:36px;background:#fff;border:2px solid #a9a9a9;"></div>
<div style="left:1878px;top:593px;width:30px;height:36px;background:#f0f0f0;"></div>
<div style="left:1876px;top:593px;width:2px;height:36px;background:#a9a9a9;"></div>
<svg style="left:1886.2px;top:607.0px" width="14" height="8" viewBox="0 0 14 8"><path d="M0.3 0.3 L13.7 0.3 L7 8 Z" fill="#555"/></svg>
<div style="left:1876px;top:593px;width:2px;height:36px;background:#a9a9a9;"></div>
<svg style="left:1887px;top:608.0px" width="12" height="7" viewBox="0 0 12 7"><path d="M0.5 0.5 L11.5 0.5 L6 6.5 Z" fill="#4a4a4a"/></svg>
<span class="t" style="left:1758.3px;top:598px;transform:scaleX(0.8031);">OCLC</span>
<div class="f" style="left:1918px;top:591px;width:212px;height:36px;background:#fff;border:2px solid #a9a9a9;"></div>
<div class="f" style="left:1750px;top:637px;width:380px;height:36px;background:#f0f0f0;border:2px solid #a9a9a9;"></div>
<div style="left:2102px;top:639px;width:30px;height:36px;background:#f0f0f0;"></div>
<div style="left:2100px;top:639px;width:2px;height:36px;background:#a9a9a9;"></div>
<div style="left:2100px;top:639px;width:2px;height:36px;background:#a9a9a9;"></div>
<svg style="left:2107px;top:647.0px" width="20" height="20" viewBox="0 0 20 20"><path d="M8.6 15.2 H3.6 V7.2 H11.5" fill="none" stroke="#6e6e6e" stroke-width="1.9" stroke-linejoin="round"/><path d="M10.6 1.8 L17.8 7.2 L10.6 12.4 Z" fill="#6e6e6e"/></svg>
<span class="t" style="left:30.8px;top:726px;transform:scaleX(0.9532);">Article Info</span>
<span class="t" style="left:179.8px;top:726px;transform:scaleX(0.9469);">Loan Info</span>
<span class="t" style="left:315.8px;top:726px;transform:scaleX(0.8929);">Collections</span>
<span class="t" style="left:461.8px;top:726px;transform:scaleX(0.8801);">Local Holdings</span>
<span class="t" style="left:639.8px;top:726px;transform:scaleX(0.9448);">Imported Request</span>
<span class="t" style="left:857.8px;top:726px;transform:scaleX(0.8551);">User</span>
<span class="t" style="left:945.8px;top:726px;transform:scaleX(0.9485);">Copyright</span>
<svg style="left:1082px;top:729px" width="9" height="14" viewBox="0 0 9 14"><path d="M8 0.5 L8 13.5 L0.5 7 Z" fill="#c4c4c4"/></svg>
<svg style="left:1121.5px;top:728.7px" width="9" height="15" viewBox="0 0 9 15"><path d="M0.5 0.3 L0.5 14.7 L8.7 7.5 Z" fill="#4a4a4a"/></svg>
<div style="left:8px;top:759px;width:1136px;height:2px;background:#c4c4c4;"></div>
<div style="left:1142.3px;top:759px;width:2px;height:398px;background:#c4c4c4;"></div>
<div style="left:8px;top:759px;width:2px;height:398px;background:#c4c4c4;"></div>
<span class="t" style="left:15.8px;top:776px;transform:scaleX(0.9152);">Compliance/Pay Meth.</span>
<span class="t" style="left:15.8px;top:822px;transform:scaleX(0.8754);">Pages</span>
<span class="t" style="left:15.8px;top:868px;transform:scaleX(0.8867);">Base Fee</span>
<span class="t" style="left:15.8px;top:914px;transform:scaleX(0.8937);">Per Page Fee</span>
<span class="t" style="left:15.8px;top:960px;transform:scaleX(0.8909);">CCC Publication ID</span>
<span class="t" style="left:15.8px;top:1006px;transform:scaleX(0.9384);">Copyright Order</span>
<span class="t" style="left:15.8px;top:1053px;transform:scaleX(0.9037);">Order Placed</span>
<div class="f" style="left:292px;top:769px;width:366px;height:36px;background:#fff;border:2px solid #a9a9a9;"></div>
<div style="left:630px;top:771px;width:30px;height:36px;background:#f0f0f0;"></div>
<div style="left:628px;top:771px;width:2px;height:36px;background:#a9a9a9;"></div>
<svg style="left:638.2px;top:785.0px" width="14" height="8" viewBox="0 0 14 8"><path d="M0.3 0.3 L13.7 0.3 L7 8 Z" fill="#555"/></svg>
<div style="left:628px;top:771px;width:2px;height:36px;background:#a9a9a9;"></div>
<svg style="left:639px;top:786.0px" width="12" height="7" viewBox="0 0 12 7"><path d="M0.5 0.5 L11.5 0.5 L6 6.5 Z" fill="#4a4a4a"/></svg>
<div class="f" style="left:670px;top:769px;width:460px;height:36px;background:#fff;border:2px solid #a9a9a9;"></div>
<div class="f" style="left:292px;top:815px;width:838px;height:36px;background:#fff;border:2px solid #a9a9a9;"></div>
<span class="t" style="left:300.8px;top:822px;transform:scaleX(0.8423);">10</span>
<div class="f" style="left:292px;top:861px;width:838px;height:36px;background:#ffff99;border:2px solid #a9a9a9;"></div>
<span class="t" style="left:299.8px;top:868px;transform:scaleX(0.9557);">8.4900</span>
<div class="f" style="left:292px;top:907px;width:838px;height:36px;background:#fff;border:2px solid #a9a9a9;"></div>
<span class="t" style="left:299.8px;top:914px;transform:scaleX(0.8385);">0</span>
<div class="f" style="left:292px;top:953px;width:838px;height:36px;background:#ffff99;border:2px solid #a9a9a9;"></div>
<span class="t" style="left:299.8px;top:960px;transform:scaleX(0.8374);">PAY PUBLISHER</span>
<div style="left:452.5px;top:959px;width:2px;height:26px;background:#1a1a5a;"></div>
<div class="f" style="left:292px;top:999px;width:838px;height:36px;background:#f0f0f0;border:2px solid #a9a9a9;"></div>
<div style="left:294.5px;top:1053px;width:22px;height:22px;background:#fff;border:2px solid #a3a3a3;"></div>
<div style="left:1150px;top:715.5px;width:379px;height:439px;border:2px solid #c4c4c4;box-shadow:1px 1px 0 #f9f9f9, inset 1px 1px 0 #f9f9f9;"></div>
<div style="left:1176px;top:745.5px;width:22px;height:22px;background:#fff;border:2px solid #a3a3a3;"></div>
<svg style="left:1176px;top:745.5px" width="26" height="26" viewBox="0 0 26 26"><path d="M4.5 15 L9 20.3 L21.3 6.8" fill="none" stroke="#666" stroke-width="2.2"/></svg>
<span class="t" style="left:1210.3px;top:746px;transform:scaleX(0.9443);">Accept Alternate Edition</span>
<div style="left:1176px;top:789.5px;width:22px;height:22px;background:#fff;border:2px solid #a3a3a3;"></div>
<span class="t" style="left:1210.3px;top:790px;transform:scaleX(0.8950);">Accept Non English</span>
<div style="left:1176px;top:833.5px;width:22px;height:22px;background:#fff;border:2px solid #a3a3a3;"></div>
<span class="t" style="left:1210.3px;top:834px;transform:scaleX(0.8795);">Allow Copies?</span>
<div style="left:1176px;top:877.5px;width:22px;height:22px;background:#fff;border:2px solid #a3a3a3;"></div>
<span class="t" style="left:1210.3px;top:878px;transform:scaleX(0.9247);">Copyright Already Paid?</span>
<div style="left:1176px;top:921.5px;width:22px;height:22px;background:#fff;border:2px solid #a3a3a3;"></div>
<span class="t" style="left:1210.3px;top:922px;transform:scaleX(0.8937);">Allow Renewals?</span>
<div style="left:1176px;top:965.5px;width:22px;height:22px;background:#fff;border:2px solid #a3a3a3;"></div>
<span class="t" style="left:1210.3px;top:966px;transform:scaleX(0.9043);">Library Use Only?</span>
<div style="left:1176px;top:1009.5px;width:22px;height:22px;background:#fff;border:2px solid #a3a3a3;"></div>
<span class="t" style="left:1210.3px;top:1010px;transform:scaleX(0.8927);">Replacement Pages?</span>
<div style="left:1176px;top:1053.5px;width:22px;height:22px;background:#fff;border:2px solid #a3a3a3;"></div>
<span class="t" style="left:1210.3px;top:1054px;transform:scaleX(0.9042);">Priority Shipping</span>
<div style="left:1176px;top:1097.5px;width:22px;height:22px;background:#fff;border:2px solid #a3a3a3;"></div>
<span class="t" style="left:1210.3px;top:1098px;transform:scaleX(0.8674);">Ariel</span>
<div style="left:1537px;top:735px;width:617px;height:419px;border:2px solid #c4c4c4;box-shadow:1px 1px 0 #f9f9f9, inset 1px 1px 0 #f9f9f9;"></div>
<div style="left:1552px;top:733px;width:180.5px;height:8px;background:#f0f0f0;"></div>
<span class="t" style="left:1559.8px;top:721px;transform:scaleX(0.9663);">Item Information</span>
<span class="t" style="left:1559.8px;top:782px;transform:scaleX(0.8742);">Call Number</span>
<span class="t" style="left:1559.8px;top:828px;transform:scaleX(0.9069);">Location</span>
<span class="t" style="left:1559.8px;top:874px;transform:scaleX(0.9165);">Due Date</span>
<span class="t" style="left:1559.8px;top:920px;transform:scaleX(0.9126);">Reason For Cancellation</span>
<span class="t" style="left:1559.8px;top:966px;transform:scaleX(0.9157);">Item Num/Ref Num</span>
<span class="t" style="left:1559.8px;top:1012px;transform:scaleX(0.8980);">ISxN</span>
<span class="t" style="left:1559.8px;top:1058px;transform:scaleX(0.9291);">Special Instructions</span>
<span class="t" style="left:1559.8px;top:1104px;transform:scaleX(0.9069);">Max Cost/Pieces</span>
<div class="f" style="left:1836px;top:775px;width:294px;height:36px;background:#fff;border:2px solid #a9a9a9;"></div>
<div class="f" style="left:1836px;top:821px;width:294px;height:36px;background:#fff;border:2px solid #a9a9a9;"></div>
<div class="f" style="left:1836px;top:867px;width:294px;height:36px;background:#fff;border:2px solid #a9a9a9;"></div>
<div style="left:2102px;top:869px;width:30px;height:36px;background:#f0f0f0;"></div>
<div style="left:2100px;top:869px;width:2px;height:36px;background:#a9a9a9;"></div>
<svg style="left:2110.2px;top:883.0px" width="14" height="8" viewBox="0 0 14 8"><path d="M0.3 0.3 L13.7 0.3 L7 8 Z" fill="#555"/></svg>
<div style="left:2100px;top:869px;width:2px;height:36px;background:#a9a9a9;"></div>
<svg style="left:2111px;top:884.0px" width="12" height="7" viewBox="0 0 12 7"><path d="M0.5 0.5 L11.5 0.5 L6 6.5 Z" fill="#4a4a4a"/></svg>
<div class="f" style="left:1836px;top:913px;width:294px;height:36px;background:#fff;border:2px solid #a9a9a9;"></div>
<div class="f" style="left:1836px;top:959px;width:156px;height:36px;background:#fff;border:2px solid #a9a9a9;"></div>
<div class="f" style="left:2004px;top:959px;width:126px;height:36px;background:#fff;border:2px solid #a9a9a9;"></div>
<div class="f" style="left:1836px;top:1005px;width:294px;height:36px;background:#fff;border:2px solid #a9a9a9;"></div>
<span class="t" style="left:1844.8px;top:1012px;transform:scaleX(0.9305);">9780749428204</span>
<div class="f" style="left:1836px;top:1051px;width:294px;height:36px;background:#fff;border:2px solid #a9a9a9;"></div>
<div class="f" style="left:1836px;top:1097px;width:156px;height:36px;background:#fff;border:2px solid #a9a9a9;"></div>
<div class="f" style="left:2004px;top:1097px;width:126px;height:36px;background:#fff;border:2px solid #a9a9a9;"></div>
<div style="left:7px;top:1163px;width:1522px;height:376px;background:#fff;border:2px solid #606060;"></div>
<div style="left:9px;top:1165px;width:1522px;height:38px;background:#f0f0f0;"></div>
<div style="left:9px;top:1203px;width:1522px;height:2px;background:#a8a8a8;"></div>
<div style="left:290px;top:1165px;width:2px;height:38px;background:#a8a8a8;"></div>
<div style="left:1146px;top:1165px;width:2px;height:38px;background:#a8a8a8;"></div>
<div style="left:1330px;top:1165px;width:2px;height:38px;background:#a8a8a8;"></div>
<span class="t" style="left:15.8px;top:1171px;transform:scaleX(0.9163);">Date</span>
<span class="t" style="left:299.8px;top:1171px;transform:scaleX(0.8959);">Note</span>
<span class="t" style="left:1156.8px;top:1171px;transform:scaleX(0.9080);">Type</span>
<span class="t" style="left:1340.8px;top:1171px;transform:scaleX(0.8940);">Added By</span>
<div style="left:1537px;top:1185px;width:617px;height:353px;border:2px solid #c4c4c4;box-shadow:1px 1px 0 #f9f9f9, inset 1px 1px 0 #f9f9f9;"></div>
<div style="left:1552px;top:1183px;width:210.5px;height:8px;background:#f0f0f0;"></div>
<span class="t" style="left:1559.8px;top:1171px;transform:scaleX(0.9568);">Citation Information</span>
<span class="t" style="left:1559.8px;top:1232px;transform:scaleX(0.9481);">Cited In</span>
<span class="t" style="left:1559.8px;top:1278px;transform:scaleX(0.8814);">Title</span>
<span class="t" style="left:1559.8px;top:1324px;transform:scaleX(0.9163);">Date</span>
<span class="t" style="left:1559.8px;top:1370px;transform:scaleX(0.8980);">Volume/Pages</span>
<div class="f" style="left:1836px;top:1225px;width:294px;height:36px;background:#fff;border:2px solid #a9a9a9;"></div>
<div class="f" style="left:1836px;top:1271px;width:294px;height:36px;background:#fff;border:2px solid #a9a9a9;"></div>
<div class="f" style="left:1836px;top:1317px;width:294px;height:36px;background:#fff;border:2px solid #a9a9a9;"></div>
<div class="f" style="left:1836px;top:1363px;width:156px;height:36px;background:#fff;border:2px solid #a9a9a9;"></div>
<div class="f" style="left:2004px;top:1363px;width:126px;height:36px;background:#fff;border:2px solid #a9a9a9;"></div>
<div style="left:0px;top:1550.7px;width:2165px;height:2px;background:#c2c2c2;"></div>
<div style="left:0px;top:1552.7px;width:2165px;height:1px;background:#f8f8f8;"></div>
<span class="t" style="left:10.0px;top:1560px;transform:scaleX(1.0159);color:#333;font-weight:bold;">Awaiting Copyright Clearance</span>
<div style="left:0px;top:1590.5px;width:2165px;height:2px;background:#faf6f0;"></div>
<span class="t" style="left:2017.8px;top:1560px;transform:scaleX(0.9077);">Borrowing</span>
<div style="left:2158px;top:1575px;width:4px;height:4px;background:#505050;"></div>
<div style="left:2152px;top:1581px;width:4px;height:4px;background:#505050;"></div>
<div style="left:2158px;top:1581px;width:4px;height:4px;background:#505050;"></div>
<div style="left:2146px;top:1587px;width:4px;height:4px;background:#505050;"></div>
<div style="left:2152px;top:1587px;width:4px;height:4px;background:#505050;"></div>
<div style="left:2158px;top:1587px;width:4px;height:4px;background:#505050;"></div>
<div style="left:2165px;top:105px;width:2px;height:1487px;background:#2f70c2;"></div>
<div style="left:2164px;top:105px;width:1px;height:1487px;background:#fbf8f2;"></div>
<div style="left:0px;top:105px;width:1px;height:1487px;background:#fbf8f2;"></div>
<div style="left:955px;top:6.2px;width:243px;height:41px;border:5px solid #ea3f22;box-shadow:1px 2px 3px rgba(0,0,0,.35), inset 0 2px 2px rgba(0,0,0,.25);"></div>
<div style="left:2px;top:292.3px;width:90px;height:39.7px;border:5px solid #ea3f22;box-shadow:1px 2px 3px rgba(0,0,0,.35), inset 0 2px 2px rgba(0,0,0,.3);"></div>
<div style="left:922.5px;top:712.3px;width:130px;height:43.7px;border:5px solid #ea3f22;box-shadow:1px 2px 3px rgba(0,0,0,.3), inset 0 2px 2px rgba(0,0,0,.3);"></div>
<div style="left:7px;top:761px;width:1135px;height:389px;border:5px solid #ea3f22;box-shadow:1px 2px 3px rgba(0,0,0,.3), inset 0 2px 2px rgba(0,0,0,.3);"></div>
</body></html>
